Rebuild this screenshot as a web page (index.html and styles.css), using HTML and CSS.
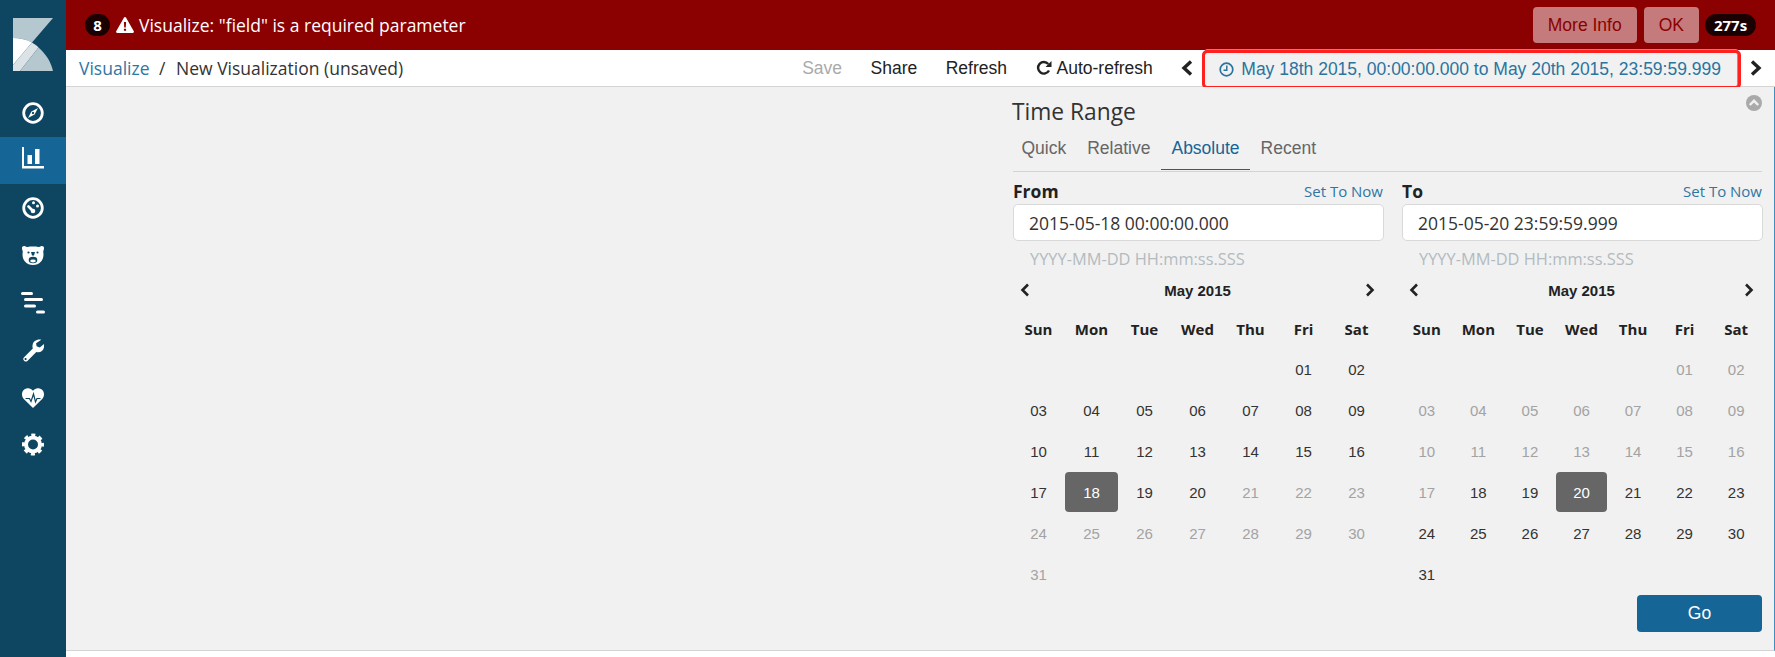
FILE: index.html
```html
<!DOCTYPE html>
<html lang="en">
<head>
    <meta charset="UTF-8">
    <title>Visualize - Kibana</title>
    <link rel="stylesheet" href="styles.css">
</head>
<body>

    <!-- side menu -->
    <div class="sidebar">
        <div class="logo">
            <svg width="40" height="53" viewBox="0 0 40 53">
                <path fill="#b5c7cf" d="M0 0H40L19 24.5C14 21.5 7 20 0 20Z"/>
                <path fill="#fff" d="M0 20C7 20 14 21.5 19 24.5L0 47Z"/>
                <path fill="#dbe3e7" d="M0 47L19 24.5C21.5 26 23.5 27.5 25.5 29.5L7 53H0Z"/>
                <path fill="#b5c7cf" d="M25.5 29.5C33 36 38 44 40 53H7Z"/>
            </svg>
        </div>
        <div class="side-item">
            <svg width="22" height="22" viewBox="0 0 22 22">
                <circle cx="11" cy="11" r="9.3" fill="none" stroke="#fff" stroke-width="2.8"/>
                <path fill="#fff" d="M16 6L12.6 12.6 6 16 9.4 9.4ZM11 9.8a1.2 1.2 0 1 0 .01 0Z" fill-rule="evenodd"/>
            </svg>
        </div>
        <div class="side-item active">
            <svg width="22" height="22" viewBox="0 0 22 22" class="lift">
                <path fill="#fff" d="M0 0H2V19H22V21.5H0Z"/>
                <rect x="5.5" y="8" width="4.5" height="9" fill="#fff"/>
                <rect x="13" y="2" width="4.5" height="15" fill="#fff"/>
            </svg>
        </div>
        <div class="side-item">
            <svg width="22" height="22" viewBox="0 0 22 22">
                <circle cx="11" cy="11" r="9.3" fill="none" stroke="#fff" stroke-width="2.8"/>
                <path stroke="#fff" stroke-width="2.6" stroke-linecap="round" d="M6.5 9.5L10.5 13.5"/>
                <circle cx="11.5" cy="5.8" r="1.5" fill="#fff"/>
                <circle cx="15.5" cy="9" r="1.5" fill="#fff"/>
                <circle cx="11" cy="14" r="2.3" fill="#fff"/>
            </svg>
        </div>
        <div class="side-item">
            <svg width="22" height="19" viewBox="0 0 22 19">
                <path fill="#fff" d="M0 2C0 .5 1.500-.2 3 .2 4 .5 4.500 1 5.500 1 8.500 .4 13.500 .4 16.500 1 17.500 1 18 .5 19 .2 20.500-.2 22 .5 22 2 22 3.500 21.500 4.500 21.200 5.500 21.800 9 21.500 12.500 19.500 15 17 18 14 19 11 19 8 19 5 18 2.500 15 .5 12.500 .2 9 .8 5.500 .5 4.500 0 3.500 0 2Z"/>
                <circle cx="6.500" cy="6.500" r="1.100" fill="#0e4560"/>
                <circle cx="15.500" cy="6.500" r="1.100" fill="#0e4560"/>
                <path fill="#0e4560" d="M9 6H13L12 9.500H10Z"/>
                <ellipse cx="11" cy="14" rx="4.300" ry="3.200" fill="#0e4560"/>
                <ellipse cx="11" cy="15" rx="2.800" ry="1.400" fill="#fff"/>
            </svg>
        </div>
        <div class="side-item">
            <svg width="24" height="22" viewBox="0 0 24 22" fill="#fff">
                <rect x="0" y="0" width="12" height="3" rx="1.500"/>
                <rect x="3" y="6" width="19" height="3" rx="1.500"/>
                <rect x="3" y="12.500" width="12" height="3" rx="1.500"/>
                <rect x="15" y="18.500" width="9" height="3" rx="1.500"/>
            </svg>
        </div>
        <div class="side-item">
            <svg width="22" height="23" viewBox="0 0 24 25">
                <path fill="#fff" d="M21 .8c-4.500-1-9 1.500-9.500 6-.2 1.300 0 2.400.3 3.400L2 20a2.800 2.800 0 0 0 3.900 3.900l9.700-9.700c4.500 1.500 9.500-2 8.400-8.700l-4.600 3.600-3.500-1.200-.5-3.400z"/>
                <circle cx="3.900" cy="21.900" r="1.200" fill="#0e4560"/>
            </svg>
        </div>
        <div class="side-item">
            <svg width="22" height="20" viewBox="0 0 22 20">
                <path fill="#fff" d="M11 20L1.800 11C-.8 8.300-.5 3.800 2 1.700 4.800-.7 8.800-.3 11 2.700 13.200-.3 17.200-.7 20 1.700 22.500 3.800 22.800 8.300 20.200 11Z"/>
                <path fill="none" stroke="#0e4560" stroke-width="1.200" d="M3.500 10.500H7.500L9 13.500 11.500 6 13.500 14 15 10.500H18.500"/>
            </svg>
        </div>
        <div class="side-item">
            <svg width="22" height="23" viewBox="0 0 22 22">
                <circle cx="11" cy="11" r="7" fill="none" stroke="#fff" stroke-width="4"/>
                <circle cx="11" cy="11" r="9.500" fill="none" stroke="#fff" stroke-width="3" stroke-dasharray="4 3.460" stroke-dashoffset="2"/>
            </svg>
        </div>
    </div>

    <div class="main">

        <!-- error toast -->
        <div class="alert">
            <span class="badge badge-count">8</span>
            <svg class="alert-icon" width="18" height="16" viewBox="0 0 18 16">
                <path fill="#fff" d="M9 0c.5 0 .9.3 1.100.7l7.700 13.600c.4.7-.1 1.700-1 1.700H1.200c-.9 0-1.400-1-1-1.700L7.900.7C8.100.3 8.500 0 9 0Z"/>
                <path fill="#8b0000" d="M7.900 5H10.100L9.800 10.500H8.200ZM7.900 11.700H10.100V13.700H7.900Z"/>
            </svg>
            <span class="alert-text">Visualize: "field" is a required parameter</span>
            <span class="alert-actions">
                <button class="alert-btn">More Info</button>
                <button class="alert-btn">OK</button>
                <span class="badge badge-time">277s</span>
            </span>
        </div>

        <!-- top nav -->
        <div class="topnav">
            <div class="crumbs">
                <a class="crumb-link">Visualize</a>
                <span class="crumb-sep">/</span>
                <span>New Visualization (unsaved)</span>
            </div>
            <div class="nav-items">
                <span class="nav-item disabled">Save</span>
                <span class="nav-item">Share</span>
                <span class="nav-item">Refresh</span>
                <span class="nav-item">
                    <svg class="refresh-icon" width="16" height="16" viewBox="0 0 16 16">
                        <path fill="none" stroke="#222" stroke-width="2.400" d="M13 10.500A5.800 5.800 0 1 1 12.300 4"/>
                        <path fill="#222" d="M15.500 1V7H9.500Z"/>
                    </svg>Auto-refresh
                </span>
                <svg class="chevron nav-prev" width="12" height="16" viewBox="0 0 12 16">
                    <path fill="none" stroke="#222" stroke-width="3.400" d="M10 1.500L3 8 10 14.500"/>
                </svg>
                <div class="date-range">
                    <svg class="clock-icon" width="15" height="15" viewBox="0 0 15 15">
                        <circle cx="7.500" cy="7.500" r="6.300" fill="none" stroke="#2a74a0" stroke-width="1.700"/>
                        <path fill="none" stroke="#2a74a0" stroke-width="1.500" d="M7.800 3.500V8.200H4.500"/>
                    </svg>May 18th 2015, 00:00:00.000 to May 20th 2015, 23:59:59.999
                </div>
                <svg class="chevron nav-next" width="12" height="16" viewBox="0 0 12 16">
                    <path fill="none" stroke="#222" stroke-width="3.400" d="M2 1.500L9 8 2 14.500"/>
                </svg>
            </div>
        </div>

        <div class="content">
            <div class="picker">
                <div class="picker-head">
                    <span class="picker-title">Time Range</span>
                    <svg width="16" height="16" viewBox="0 0 16 16">
                        <circle cx="8" cy="8" r="8" fill="#aaa"/>
                        <path fill="none" stroke="#f1f1f1" stroke-width="2.400" d="M3.800 10L8 5.800 12.200 10"/>
                    </svg>
                </div>
                <div class="tabs">
                    <span class="tab">Quick</span>
                    <span class="tab">Relative</span>
                    <span class="tab current">Absolute</span>
                    <span class="tab">Recent</span>
                </div>
                <div class="ranges">

                    <!-- from -->
                    <div class="range">
                        <div class="range-label"><b>From</b><a class="set-now">Set To Now</a></div>
                        <input class="range-input" type="text" value="2015-05-18 00:00:00.000">
                        <div class="range-hint">YYYY-MM-DD HH:mm:ss.SSS</div>
                        <div class="month">
                            <svg width="10" height="14" viewBox="0 0 10 14"><path fill="none" stroke="#222" stroke-width="2.600" d="M8 1.500L2.500 7 8 12.500"/></svg>
                            <span>May 2015</span>
                            <svg width="10" height="14" viewBox="0 0 10 14"><path fill="none" stroke="#222" stroke-width="2.600" d="M2 1.500L7.500 7 2 12.500"/></svg>
                        </div>
                        <div class="days">
                            <span class="dow">Sun</span><span class="dow">Mon</span><span class="dow">Tue</span><span class="dow">Wed</span><span class="dow">Thu</span><span class="dow">Fri</span><span class="dow">Sat</span>
                            <span></span><span></span><span></span><span></span><span></span><span class="day">01</span><span class="day">02</span>
                            <span class="day">03</span><span class="day">04</span><span class="day">05</span><span class="day">06</span><span class="day">07</span><span class="day">08</span><span class="day">09</span>
                            <span class="day">10</span><span class="day">11</span><span class="day">12</span><span class="day">13</span><span class="day">14</span><span class="day">15</span><span class="day">16</span>
                            <span class="day">17</span><span class="day selected">18</span><span class="day">19</span><span class="day">20</span><span class="day muted">21</span><span class="day muted">22</span><span class="day muted">23</span>
                            <span class="day muted">24</span><span class="day muted">25</span><span class="day muted">26</span><span class="day muted">27</span><span class="day muted">28</span><span class="day muted">29</span><span class="day muted">30</span>
                            <span class="day muted">31</span>
                        </div>
                    </div>

                    <!-- to -->
                    <div class="range">
                        <div class="range-label"><b>To</b><a class="set-now">Set To Now</a></div>
                        <input class="range-input" type="text" value="2015-05-20 23:59:59.999">
                        <div class="range-hint">YYYY-MM-DD HH:mm:ss.SSS</div>
                        <div class="month">
                            <svg width="10" height="14" viewBox="0 0 10 14"><path fill="none" stroke="#222" stroke-width="2.600" d="M8 1.500L2.500 7 8 12.500"/></svg>
                            <span>May 2015</span>
                            <svg width="10" height="14" viewBox="0 0 10 14"><path fill="none" stroke="#222" stroke-width="2.600" d="M2 1.500L7.500 7 2 12.500"/></svg>
                        </div>
                        <div class="days">
                            <span class="dow">Sun</span><span class="dow">Mon</span><span class="dow">Tue</span><span class="dow">Wed</span><span class="dow">Thu</span><span class="dow">Fri</span><span class="dow">Sat</span>
                            <span></span><span></span><span></span><span></span><span></span><span class="day muted">01</span><span class="day muted">02</span>
                            <span class="day muted">03</span><span class="day muted">04</span><span class="day muted">05</span><span class="day muted">06</span><span class="day muted">07</span><span class="day muted">08</span><span class="day muted">09</span>
                            <span class="day muted">10</span><span class="day muted">11</span><span class="day muted">12</span><span class="day muted">13</span><span class="day muted">14</span><span class="day muted">15</span><span class="day muted">16</span>
                            <span class="day muted">17</span><span class="day">18</span><span class="day">19</span><span class="day selected">20</span><span class="day">21</span><span class="day">22</span><span class="day">23</span>
                            <span class="day">24</span><span class="day">25</span><span class="day">26</span><span class="day">27</span><span class="day">28</span><span class="day">29</span><span class="day">30</span>
                            <span class="day">31</span>
                        </div>
                        <div class="go-row"><button class="go-btn">Go</button></div>
                    </div>

                </div>
            </div>
        </div>
    </div>

</body>
</html>
```

FILE: styles.css
```css
body {
    margin: 0;
    height: 657px;
    display: flex;
    overflow: hidden;
    background-color: white;
    font-family: "Open Sans", sans-serif;
    font-size: 17.5px;
    color: #333;
}

/* side menu */
.sidebar {
    width: 66px;
    flex-shrink: 0;
    background-color: #0e4560;
}
.logo {
    display: flex;
    justify-content: center;
    padding: 18px 0 18.500px;
}
.side-item {
    height: 47.4px;
    display: flex;
    align-items: center;
    justify-content: center;
}
.side-item.active {
    background-color: #156597;
}
.side-item .lift {
    margin-top: -6px;
}

.main {
    flex-grow: 1;
    min-width: 0;
    display: flex;
    flex-direction: column;
}

/* error toast */
.alert {
    height: 50px;
    flex-shrink: 0;
    display: flex;
    align-items: center;
    padding: 0 19px;
    background-color: #8b0000;
    color: white;
}
.badge {
    height: 22px;
    line-height: 22px;
    border-radius: 11px;
    background-color: #1a0000;
    color: white;
    font-size: 15px;
    font-weight: 700;
    text-align: center;
}
.badge-count {
    width: 25px;
}
.alert-icon {
    margin: 0 5px 0 6px;
}
.alert-actions {
    margin-left: auto;
    display: flex;
    align-items: center;
}
.alert-btn {
    height: 36px;
    padding: 0 15px;
    margin-right: 7px;
    border: none;
    border-radius: 4px;
    background-color: #c57b7b;
    color: #8b0000;
    font-family: "Liberation Sans", Arial, sans-serif;
    font-size: 17.5px;
}
.badge-time {
    width: 51px;
    margin-left: -1px;
}

/* top nav */
.topnav {
    height: 36px;
    flex-shrink: 0;
    display: flex;
    align-items: center;
    justify-content: space-between;
    padding: 0 13px;
    border-bottom: 1px solid #d4d4d4;
}
.crumb-link {
    color: #2f76a3;
}
.crumb-sep {
    margin: 0 6px 0 5px;
}
.nav-items {
    display: flex;
    align-items: center;
    height: 100%;
    font-family: "Liberation Sans", Arial, sans-serif;
    color: #222;
}
.nav-item {
    margin-right: 28.500px;
    display: flex;
    align-items: center;
}
.nav-item.disabled {
    color: #aaa;
}
.refresh-icon {
    margin-right: 5px;
}
.nav-prev {
    margin-right: 12px;
}
.nav-next {
    margin-left: 12px;
}
.date-range {
    height: 33px;
    margin-top: 3px;
    display: flex;
    align-items: center;
    padding: 0 16px 0 14px;
    box-sizing: border-box;
    background-color: #f1f1f1;
    border-right: 1px solid #6fa5c5;
    color: #2a74a0;
    outline: 3px solid #ff2020;
    border-radius: 2px;
    box-shadow: 0 -4px 0 #6fa5c5, 0 4px 0 #6fa5c5;
}
.clock-icon {
    margin-right: 7px;
}

/* time picker */
.content {
    flex-grow: 1;
    min-height: 0;
    margin-bottom: 6px;
    display: flex;
    justify-content: flex-end;
    padding-right: 12px;
    background-color: #f1f1f1;
    border-bottom: 1px solid #d4d4d4;
    border-right: 1px solid #3f8fbf;
}
.picker {
    width: 750px;
}
.picker-head {
    display: flex;
    justify-content: space-between;
    align-items: flex-start;
    padding-top: 8px;
    height: 34px;
}
.picker-title {
    font-size: 22.750px;
    line-height: 34px;
}
.tabs {
    display: flex;
    height: 42px;
    margin-left: 1px;
    border-bottom: 1px solid #d4d4d4;
    font-family: "Liberation Sans", Arial, sans-serif;
    color: #666;
}
.tab {
    height: 41px;
    box-sizing: border-box;
    padding: 0 10.500px;
    line-height: 38px;
}
.tab:first-child {
    margin-left: -2px;
}
.tab.current {
    color: #156597;
    border-bottom: 1px solid #156597;
}
.ranges {
    display: grid;
    grid-template-columns: 371px 361px;
    column-gap: 18px;
}
.range-label {
    display: flex;
    justify-content: space-between;
    align-items: center;
    height: 32px;
    padding: 6px 0 0 1px;
    box-sizing: border-box;
}
.range-label b {
    color: #222;
}
.set-now {
    font-size: 15px;
    color: #2f76a3;
}
.range-input {
    display: block;
    width: 100%;
    height: 37px;
    box-sizing: border-box;
    margin-left: 1px;
    padding: 0 15px;
    border: 1px solid #d9d9d9;
    border-radius: 5px;
    background-color: white;
    font-family: "Open Sans", sans-serif;
    font-size: 17.5px;
    color: #333;
}
.range-hint {
    height: 32px;
    line-height: 36px;
    padding-left: 18px;
    font-size: 16.400px;
    color: #b3bbc0;
}
.month {
    height: 34px;
    display: flex;
    justify-content: space-between;
    align-items: center;
    padding: 0 8px;
    font-family: "Liberation Sans", Arial, sans-serif;
    font-size: 15px;
    font-weight: 700;
    color: #222;
}
.days {
    display: grid;
    grid-template-columns: repeat(7, 1fr);
    grid-auto-rows: 41px;
    margin-top: 1px;
}
.dow {
    display: flex;
    align-items: center;
    justify-content: center;
    font-size: 15px;
    font-weight: 700;
    color: #222;
}
.day {
    display: flex;
    align-items: center;
    justify-content: center;
    height: 40px;
    font-family: "Liberation Sans", Arial, sans-serif;
    font-size: 15px;
    color: #333;
}
.day.muted {
    color: #a3a3a3;
}
.day.selected {
    background-color: #666;
    border-radius: 4px;
    color: white;
}
.go-row {
    display: flex;
    justify-content: flex-end;
}
.go-btn {
    width: 125px;
    height: 37px;
    border: none;
    border-radius: 4px;
    background-color: #156597;
    color: white;
    font-family: "Liberation Sans", Arial, sans-serif;
    font-size: 17.5px;
}
```
